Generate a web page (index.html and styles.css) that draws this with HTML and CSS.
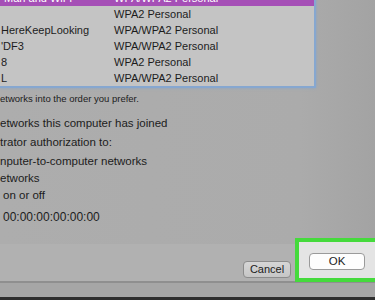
FILE: index.html
```html
<!DOCTYPE html>
<html lang="en">
<head>
    <meta charset="UTF-8">
    <meta name="viewport" content="width=device-width, initial-scale=1.0">
    <title>Wi-Fi Advanced</title>
    <link rel="stylesheet" href="styles.css">
</head>
<body>
    <div class="window">
        <!-- Preferred networks list -->
        <div class="network-list">
            <div class="row selected">
                <span class="col-name">&nbsp;Man and WiFi</span>
                <span class="col-sec">WPA/WPA2 Personal</span>
            </div>
            <div class="row">
                <span class="col-name"></span>
                <span class="col-sec">WPA2 Personal</span>
            </div>
            <div class="row">
                <span class="col-name">HereKeepLooking</span>
                <span class="col-sec">WPA/WPA2 Personal</span>
            </div>
            <div class="row">
                <span class="col-name">'DF3</span>
                <span class="col-sec">WPA/WPA2 Personal</span>
            </div>
            <div class="row">
                <span class="col-name">8</span>
                <span class="col-sec">WPA2 Personal</span>
            </div>
            <div class="row">
                <span class="col-name">L</span>
                <span class="col-sec">WPA/WPA2 Personal</span>
            </div>
        </div>

        <p class="hint">etworks into the order you prefer.</p>

        <!-- Options -->
        <div class="options">
            <div class="opt gap">etworks this computer has joined</div>
            <div class="opt gap">trator authorization to:</div>
            <div class="opt">nputer-to-computer networks</div>
            <div class="opt">etworks</div>
            <div class="opt indent">on or off</div>
            <div class="opt address">00:00:00:00:00:00</div>
        </div>

        <!-- Buttons -->
        <div class="footer">
            <button class="btn cancel">Cancel</button>
            <div class="highlight">
                <button class="btn ok">OK</button>
            </div>
        </div>
        <div class="bottom-bar"></div>
        <div class="dock-edge"></div>
    </div>
</body>
</html>
```

FILE: styles.css
```css
/* Page */
body {
    margin: 0;
    font-family: "Liberation Sans", Arial, sans-serif;
    color: #1c1c1c;
}

.window {
    width: 375px;
    height: 300px;
    overflow: hidden;
    background: linear-gradient(to right, #adadad 0%, #ababab 80%, #a3a3a3 100%);
    display: flex;
    flex-direction: column;
}

/* Network list */
.network-list {
    width: 314px;
    margin-top: -10px;
    background: #c4c4c4;
    border-right: 2px solid #86a7d0;
    border-bottom: 2px solid #86a7d0;
    box-shadow: 0 0 3px #8aa6c8;
    flex-shrink: 0;
}

.row {
    height: 16px;
    display: flex;
    align-items: center;
    font-size: 11px;
}

.row.selected {
    background: #a54fb6;
    color: #fff;
}

.col-name {
    width: 114px;
    padding-left: 1px;
    box-sizing: border-box;
    white-space: nowrap;
}

.col-sec {
    white-space: nowrap;
}

/* Hint text */
.hint {
    margin: 5px 0 0;
    font-size: 9.5px;
    line-height: 12px;
}

/* Options */
.options {
    margin-top: 10px;
    font-size: 11.5px;
}

.opt {
    line-height: 17px;
    white-space: nowrap;
}

.opt.gap {
    margin-bottom: 2px;
}

.opt.indent {
    padding-left: 3px;
}

.opt.address {
    margin-top: 5px;
    padding-left: 3px;
    font-size: 12px;
}

/* Footer */
.footer {
    margin-top: auto;
    height: 37px;
    background: #b1b1b1;
    border-bottom: 2px solid #8f8f8f;
    display: flex;
    justify-content: flex-end;
    align-items: center;
    gap: 4px;
    flex-shrink: 0;
}

.btn {
    height: 17px;
    padding: 0;
    border-radius: 4px;
    font-family: inherit;
    font-size: 11px;
    color: #1c1c1c;
}

.cancel {
    width: 48px;
    background: linear-gradient(#d6d6d6, #c6c6c6);
    border: 1px solid #8c8c8c;
    margin-top: 13px;
}

.highlight {
    align-self: flex-start;
    margin-top: -6px;
    margin-right: -8px;
    height: 44px;
    box-sizing: border-box;
    padding: 0 14px 0 10px;
    border: 4px solid #45da3c;
    background: #e4e4e4;
    display: flex;
    align-items: center;
}

.ok {
    width: 56px;
    background: #fdfdfd;
    border: 1px solid #9a9a9a;
    margin-top: 2px;
    font-size: 11.5px;
}

.bottom-bar {
    height: 14px;
    background: #a6a6a6;
    flex-shrink: 0;
}

.dock-edge {
    height: 3px;
    background: #2e2e2e;
    flex-shrink: 0;
}
```
